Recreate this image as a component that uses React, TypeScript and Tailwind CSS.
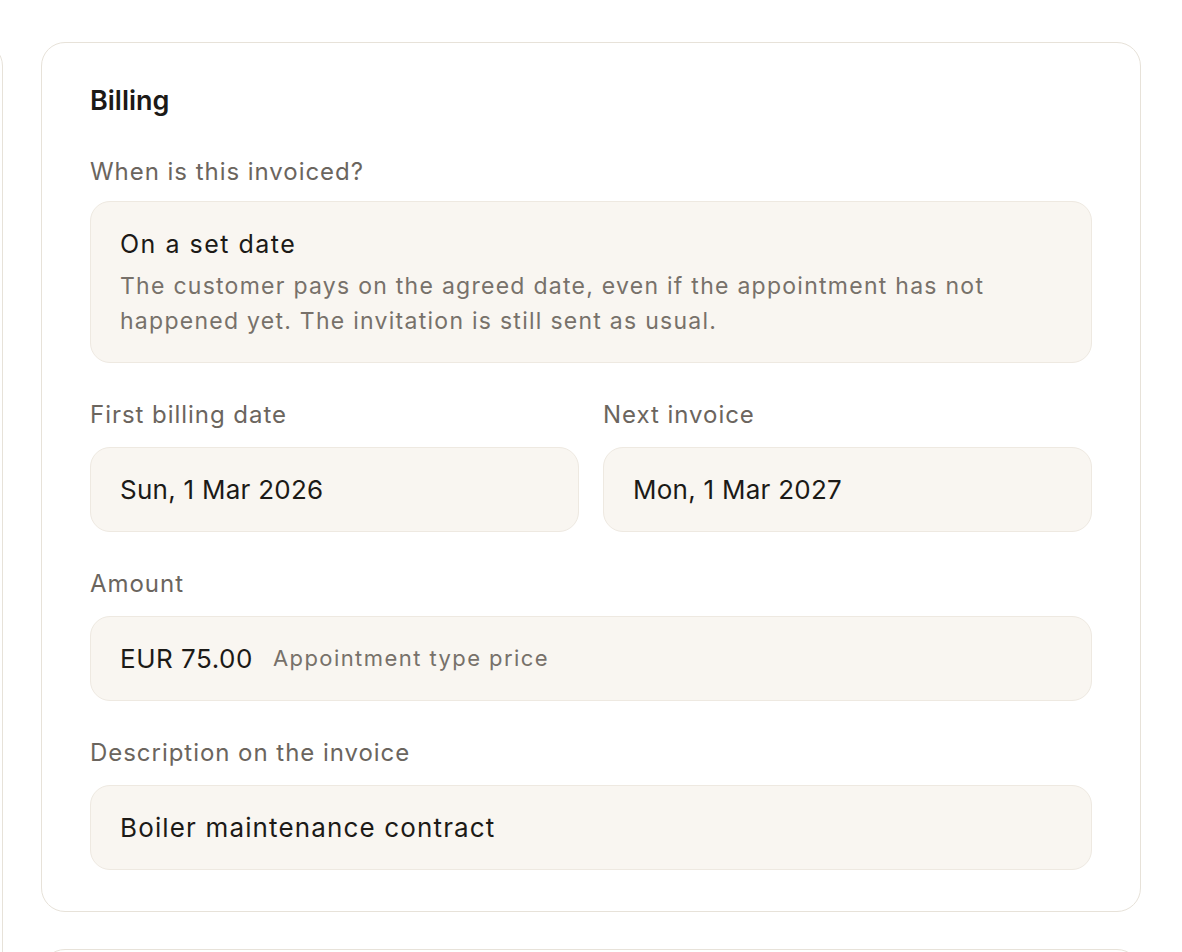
import React from "react";

const FONT = { fontFamily: "Inter, 'Noto Sans', sans-serif" };

function Label({ children }: { children: React.ReactNode }) {
  return <div className="text-[24px] leading-8 tracking-[0.04em] text-[#6b655e]">{children}</div>;
}

function Field({ children }: { children: React.ReactNode }) {
  return (
    <div className="mt-4 flex h-[85px] items-center rounded-[20px] border border-[#eee9e1] bg-[#f9f6f1] px-[29px] text-[26px] text-[#1c1a17]">
      {children}
    </div>
  );
}

export default function App() {
  return (
    <div className="min-h-screen overflow-hidden bg-white" style={FONT}>
      <div className="flex gap-[38px] pt-[42px] -ml-[397px]">
        {/* side panel, mostly off screen */}
        <div className="h-[1000px] w-[400px] shrink-0 rounded-3xl border border-[#e7e2d9]" />

        <div className="w-[1100px] shrink-0">
          <section className="rounded-3xl border border-[#e7e2d9] px-12 pt-10 pb-[41px]">
            <h3 className="text-[27px] font-semibold leading-9 text-[#1c1a17]">Billing</h3>

            <div className="mt-[37px]">
              <Label>When is this invoiced?</Label>
              <div className="mt-[13px] rounded-[20px] border border-[#eee9e1] bg-[#f9f6f1] px-[29px] pt-[25px] pb-[23px]">
                <div className="text-[25px] leading-[34px] tracking-[0.06em] text-[#1c1a17]">On a set date</div>
                <p className="mt-2 text-[23px] leading-[35px] tracking-[0.055em] text-[#77716a]">
                  The customer pays on the agreed date, even if the appointment has not happened yet. The
                  invitation is still sent as usual.
                </p>
              </div>
            </div>

            <div className="mt-9 grid grid-cols-2 gap-6">
              <div>
                <Label>First billing date</Label>
                <Field>
                  <span className="tracking-[0.01em]">Sun, 1 Mar 2026</span>
                </Field>
              </div>
              <div>
                <Label>Next invoice</Label>
                <Field>
                  <span className="tracking-[0.01em]">Mon, 1 Mar 2027</span>
                </Field>
              </div>
            </div>

            <div className="mt-9">
              <Label>Amount</Label>
              <Field>
                <span className="tracking-[0.02em]">EUR 75.00</span>
                <span className="ml-5 text-[22px] tracking-[0.065em] text-[#77716a]">Appointment type price</span>
              </Field>
            </div>

            <div className="mt-9">
              <Label>Description on the invoice</Label>
              <Field>
                <span className="tracking-[0.044em]">Boiler maintenance contract</span>
              </Field>
            </div>
          </section>

          <section className="mt-[37px] h-[300px] rounded-3xl border border-[#e7e2d9]" />
        </div>
      </div>
    </div>
  );
}
